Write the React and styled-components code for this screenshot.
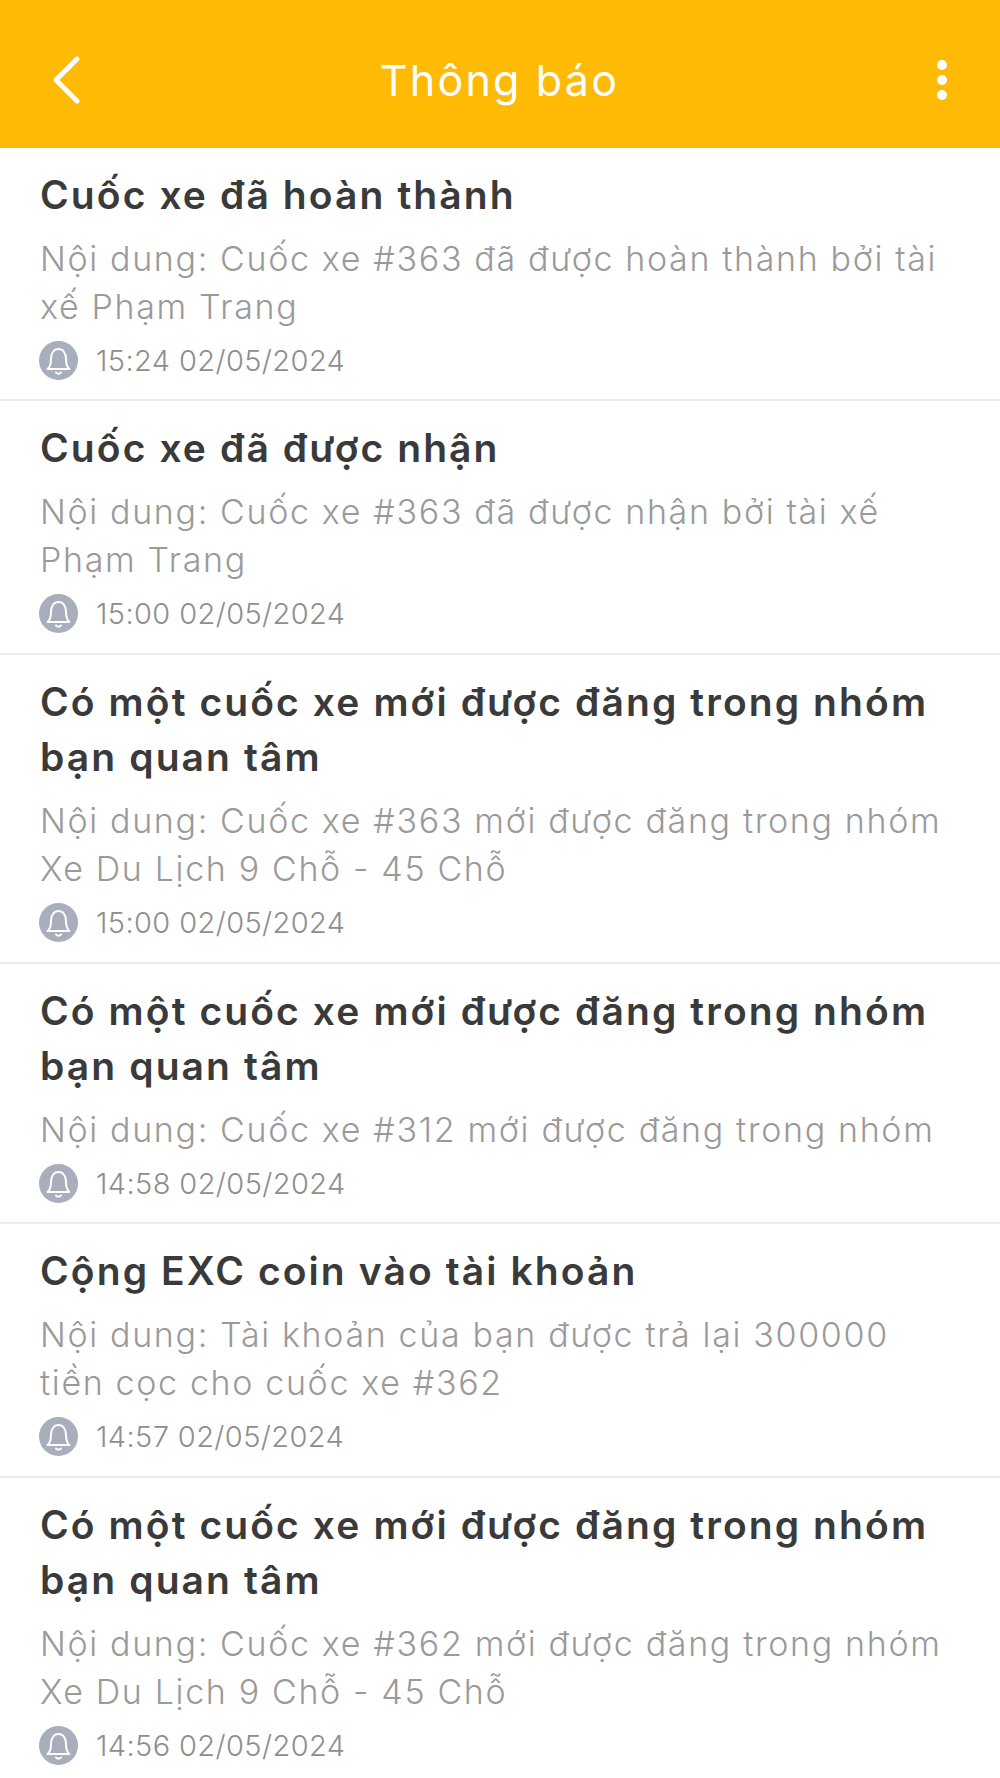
import React from 'react';
import styled, { createGlobalStyle } from 'styled-components';

const GlobalStyle = createGlobalStyle`
    html, body {
        margin: 0;
        padding: 0;
        background: #fff;
        font-family: Inter, "Noto Sans", sans-serif;
    }
`;

const Page = styled.div`
    width: 1000px;
    height: 1778px;
    overflow: hidden;
    background: #fff;
`;

const Header = styled.header`
    box-sizing: border-box;
    height: 148px;
    background: #ffba05;
    display: flex;
    align-items: center;
    justify-content: space-between;
    padding: 12px 53px 0 51px;
`;

const Title = styled.h1`
    margin: 0;
    flex: 1;
    text-align: center;
    font-size: 43px;
    font-weight: 400;
    letter-spacing: 2.2px;
    color: #fff;
    padding-right: 19px;
`;

const IconButton = styled.div`
    display: flex;
    align-items: center;
    justify-content: center;
`;

const List = styled.div`
    display: flex;
    flex-direction: column;
`;

const Item = styled.div`
    box-sizing: border-box;
    height: ${props => props.height}px;
    padding: 19px 40px 0;
    border-bottom: 2px solid #ececec;
`;

const ItemTitle = styled.div`
    font-size: 39px;
    line-height: 55px;
    font-weight: 600;
    color: #3a3a3a;
    letter-spacing: 2.1px;
    white-space: pre-line;
`;

const ItemBody = styled.div`
    margin-top: 13px;
    font-size: 34px;
    line-height: 48px;
    font-weight: 300;
    color: #9a9a9a;
    letter-spacing: 1.65px;
    white-space: pre-line;
`;

const TimeRow = styled.div`
    display: flex;
    align-items: center;
    gap: 18px;
    margin-top: 10px;
    margin-left: -1px;
`;

const BellBadge = styled.div`
    width: 39px;
    height: 39px;
    border-radius: 50%;
    background: #a9aebd;
    display: flex;
    align-items: center;
    justify-content: center;
`;

const Time = styled.span`
    font-size: 29px;
    font-weight: 300;
    color: #8e8e8e;
    letter-spacing: 0.4px;
`;

const BellIcon = () => (
    <svg width="27" height="30" viewBox="0 0 27 30" fill="none" stroke="#fff" strokeWidth="2" strokeLinecap="round" strokeLinejoin="round">
        <path d="M2.500 23c2.500-2 3.500-5 3.500-10 0-6 3-10 7.500-10S21 7 21 13c0 5 1 8 3.500 10z" />
        <path d="M11 26.500c1.500 1.500 3.500 1.500 5 0" />
    </svg>
);

const items = [
    { height: 253, title: 'Cuốc xe đã hoàn thành', body: 'Nội dung: Cuốc xe #363 đã được hoàn thành bởi tài\nxế Phạm Trang', time: '15:24 02/05/2024' },
    { height: 254, title: 'Cuốc xe đã được nhận', body: 'Nội dung: Cuốc xe #363 đã được nhận bởi tài xế\nPhạm Trang', time: '15:00 02/05/2024' },
    { height: 309, title: 'Có một cuốc xe mới được đăng trong nhóm\nbạn quan tâm', body: 'Nội dung: Cuốc xe #363 mới được đăng trong nhóm\nXe Du Lịch 9 Chỗ - 45 Chỗ', time: '15:00 02/05/2024' },
    { height: 260, title: 'Có một cuốc xe mới được đăng trong nhóm\nbạn quan tâm', body: 'Nội dung: Cuốc xe #312 mới được đăng trong nhóm', time: '14:58 02/05/2024' },
    { height: 254, title: 'Cộng EXC coin vào tài khoản', body: 'Nội dung: Tài khoản của bạn được trả lại 300000\ntiền cọc cho cuốc xe #362', time: '14:57 02/05/2024' },
    { height: 310, title: 'Có một cuốc xe mới được đăng trong nhóm\nbạn quan tâm', body: 'Nội dung: Cuốc xe #362 mới được đăng trong nhóm\nXe Du Lịch 9 Chỗ - 45 Chỗ', time: '14:56 02/05/2024' },
];

const App = () => (
    <Page>
        <GlobalStyle />
        <Header>
            <IconButton>
                <svg width="30" height="48" viewBox="0 0 30 48" fill="none" stroke="#fff" strokeWidth="5" strokeLinecap="round" strokeLinejoin="round">
                    <path d="M26 3 5 24l21 21" />
                </svg>
            </IconButton>
            <Title>Thông báo</Title>
            <IconButton>
                <svg width="10" height="40" viewBox="0 0 10 40" fill="#fff">
                    <circle cx="5" cy="5" r="5" />
                    <circle cx="5" cy="20" r="5" />
                    <circle cx="5" cy="35" r="5" />
                </svg>
            </IconButton>
        </Header>
        <List>
            {items.map((item, i) => (
                <Item key={i} height={item.height}>
                    <ItemTitle>{item.title}</ItemTitle>
                    <ItemBody>{item.body}</ItemBody>
                    <TimeRow>
                        <BellBadge><BellIcon /></BellBadge>
                        <Time>{item.time}</Time>
                    </TimeRow>
                </Item>
            ))}
        </List>
    </Page>
);

export default App;
